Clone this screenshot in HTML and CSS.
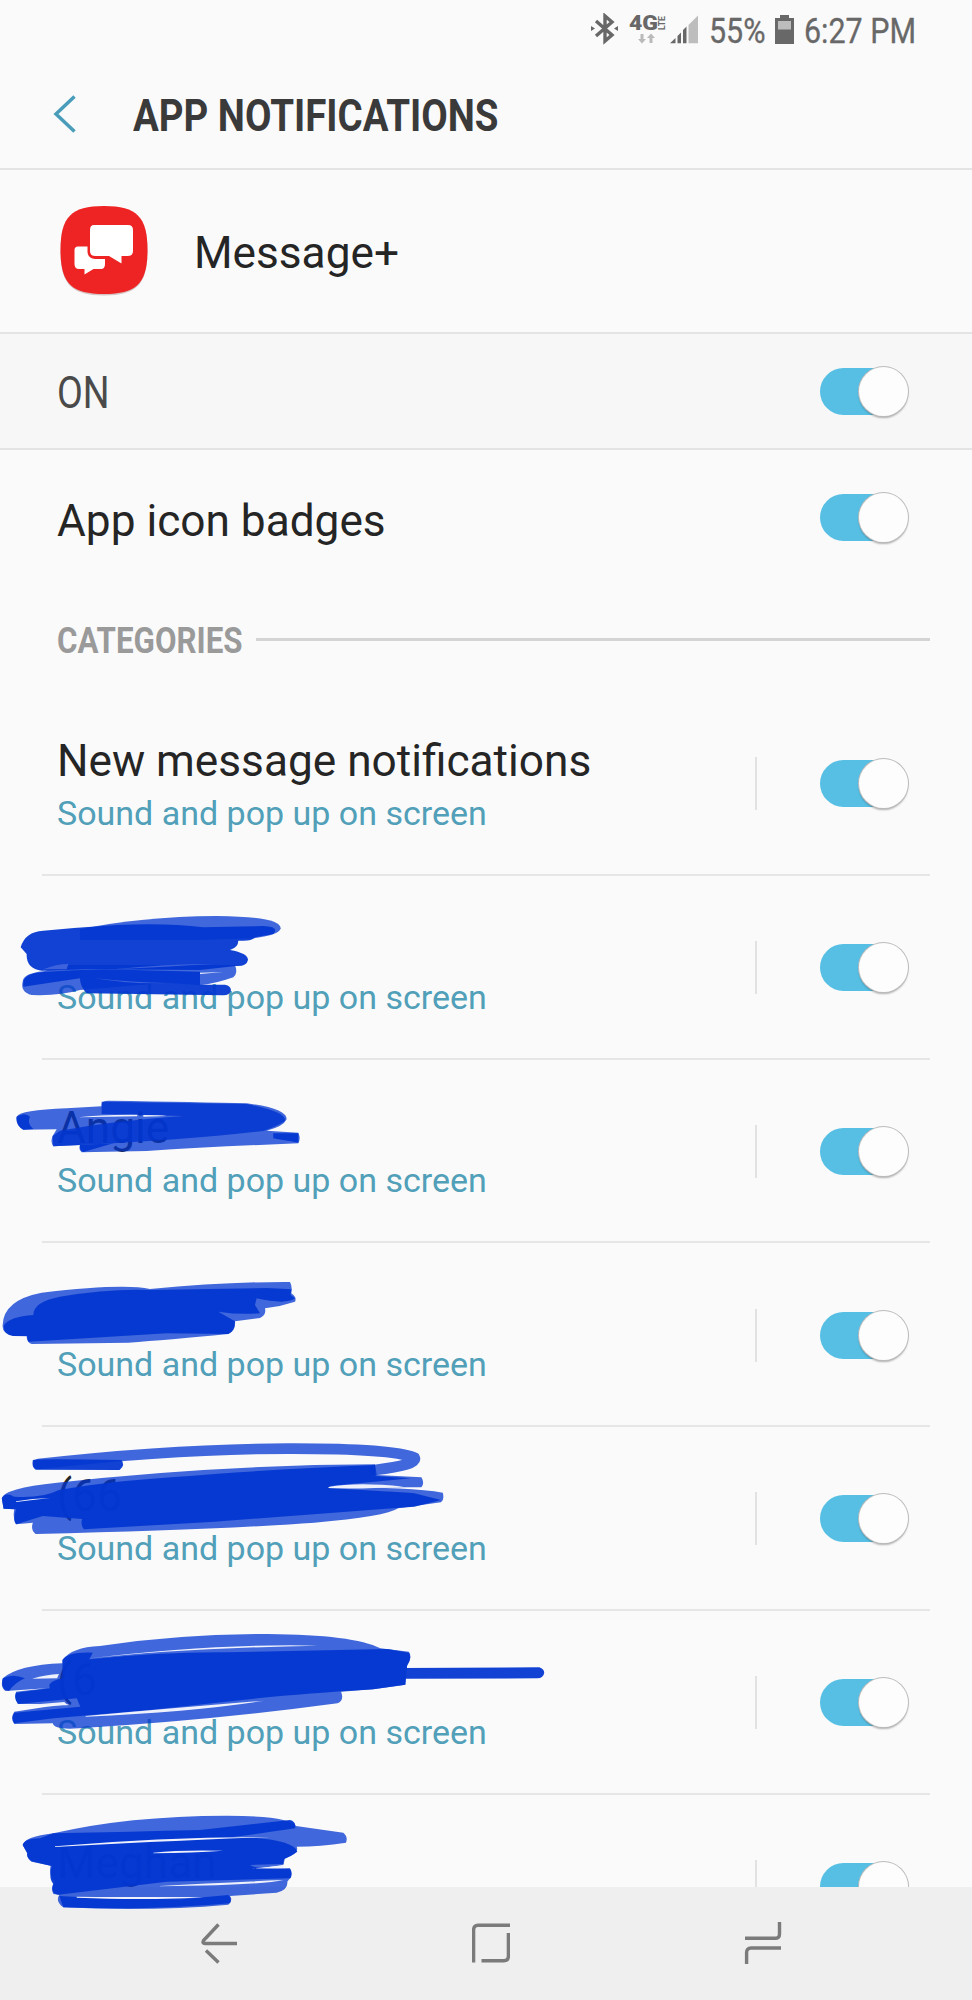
FILE: index.html
```html
<!DOCTYPE html>
<html lang="en">
<head>
  <meta charset="UTF-8">
  <meta name="viewport" content="width=device-width, initial-scale=1.0">
  <title>App notifications</title>
  <link rel="stylesheet" href="styles.css">
</head>
<body>
  <div class="screen">
    <div class="statusbar">
      <svg class="status-icons" width="110" height="32" viewBox="0 0 110 32">
        <g fill="none" stroke="#686868" stroke-width="3.4">
          <path d="M5 8 L21 22 L14 28 V3 L21 9 L5 23"/>
        </g>
        <path fill="#686868" d="M0 13 l4 2.5 l-4 2.5z M27 13 l-4 2.5 l4 2.5z"/>
        <text class="net" x="38" y="17" textLength="29" lengthAdjust="spacingAndGlyphs">4G</text>
        <text class="lte" transform="translate(73.5 17) rotate(-90)" textLength="14" lengthAdjust="spacingAndGlyphs">LTE</text>
        <path fill="#bababa" d="M49.500 21h3v5h2.500l-4 4.500l-4-4.500h2.500z M58.500 30v-5h-2.500l4-4.500l4 4.500h-2.500v5z"/>
        <path fill="#686868" d="M79 30.300 L84.500 25 V30.300z M86.500 30.300 V23 L90 19.500 V30.300z M92 30.300 V17 L95.500 13.500 V30.300z"/>
        <path fill="#bdbdbd" d="M97.500 30.300 V12 L107 2.500 V30.300z"/>
      </svg>
      <span class="battery-text"><span class="squeeze">55%</span></span>
      <svg class="battery" width="19" height="29" viewBox="0 0 19 29">
        <path fill="#686868" d="M5 0h9v3h5v26H0V3h5z"/>
        <path fill="#bdbdbd" d="M3 6h13v8.500H3z"/>
      </svg>
      <span class="clock"><span class="squeeze">6:27 PM</span></span>
    </div>

    <header>
      <svg class="back" width="24" height="38" viewBox="0 0 24 38">
        <path fill="none" stroke="#4a9dba" stroke-width="3.500" d="M21.500 1.500 L3 19 L21.500 36.500"/>
      </svg>
      <h1>APP NOTIFICATIONS</h1>
    </header>

    <div class="app">
      <svg class="app-icon" width="90" height="92" viewBox="0 0 90 92">
        <path fill="#d5c4c4" d="M45 3 C78 3 88.500 13 88.500 46 C88.500 79 78 90.500 45 90.500 C12 90.500 1.500 79 1.500 46 C1.500 13 12 3 45 3z"/>
        <path fill="#ee2324" d="M45 1 C78 1 88.500 12 88.500 45 C88.500 78 78 89 45 89 C12 89 1.500 78 1.500 45 C1.500 12 12 1 45 1z"/>
        <path fill="#fff" d="M35 20 H69 Q74 20 74 25 V46 Q74 51 69 51 H62.500 V58.500 L50 51 H36 Q31 51 31 46 V25 Q31 20 35 20z"/>
        <path fill="#fff" d="M19 41.500 H28.500 V47 Q29 53.500 36 54 H46 V59 Q46 64 42 64 H34.500 L25.500 69.500 V64 H20 Q15.500 64 15.500 59 V45 Q15.500 41.500 19 41.500z"/>
      </svg>
      <span class="label">Message+</span>
    </div>

    <div class="row master">
      <span class="label on">ON</span>
      <span class="toggle"></span>
    </div>

    <div class="row badges">
      <span class="label">App icon badges</span>
      <span class="toggle"></span>
    </div>

    <div class="section"><h2>CATEGORIES</h2><hr></div>

    <div class="list">
      <div class="item">
        <div class="text"><div class="name">New message notifications</div><div class="sub">Sound and pop up on screen</div></div>
        <span class="toggle"></span>
      </div>
      <div class="item">
        <div class="text"><div class="name">&nbsp;</div><div class="sub">Sound and pop up on screen</div></div>
        <span class="toggle"></span>
      </div>
      <div class="item">
        <div class="text"><div class="name">Angie</div><div class="sub">Sound and pop up on screen</div></div>
        <span class="toggle"></span>
      </div>
      <div class="item">
        <div class="text"><div class="name">&nbsp;</div><div class="sub">Sound and pop up on screen</div></div>
        <span class="toggle"></span>
      </div>
      <div class="item">
        <div class="text"><div class="name">(66</div><div class="sub">Sound and pop up on screen</div></div>
        <span class="toggle"></span>
      </div>
      <div class="item">
        <div class="text"><div class="name">(6</div><div class="sub">Sound and pop up on screen</div></div>
        <span class="toggle"></span>
      </div>
      <div class="item">
        <div class="text"><div class="name">Meghan</div><div class="sub">&nbsp;</div></div>
        <span class="toggle"></span>
      </div>
    </div>

    <nav>
      <svg width="38" height="42" viewBox="0 0 38 42"><path d="M18.500 2.500 L3.500 18.500 Q2 21.500 5 21.500 H37 M6 28.500 L18.500 40.500"/></svg>
      <svg width="38" height="42" viewBox="0 0 38 42"><path d="M1.600 40.500 V8 Q1.600 3.300 6 3.300 H38 M36.400 11 V34 Q36.400 38.700 32 38.700 H9.500"/></svg>
      <svg width="38" height="42" viewBox="0 0 38 42"><path d="M35.500 0 V12 Q35.500 16.300 31 16.300 H1 M37 26 H7 Q2.600 26 2.600 30.500 V42"/></svg>
    </nav>

    <!-- marker strokes over the contact names -->
    <svg class="ink" width="972" height="2000" viewBox="0 0 972 2000">
      <g transform="translate(0 890) scale(.3333)">
        <path class="wash" d="M240 118 Q420 80 650 78 Q842 80 842 115 Q840 135 760 145 L600 150 L240 150z"/>
        <path class="solid" d="M62 172 Q75 125 130 122 Q240 112 350 105 Q500 98 610 112 L790 108 Q840 110 820 132 L765 142 Q755 155 715 152 Q715 172 690 180 Q745 190 744 210 Q740 230 708 228 L600 240 L260 238 L125 242 Q78 235 80 192z"/>
        <path class="wash" d="M190 225 L705 225 Q715 250 700 262 Q650 280 600 286 L500 278 L240 300 Q180 318 95 315 Q60 305 68 275 Q70 250 130 244z"/>
        <path class="solid" d="M70 275 Q75 250 130 246 Q260 235 400 240 L600 245 V284 L675 284 Q693 288 693 301 Q690 316 670 316 L260 310 Q240 290 240 265 L70 290z"/>
        <path class="gap-soft" d="M280 264 Q400 278 500 279 Q400 284 280 264z M340 238 Q500 222 640 222 Q500 230 340 238z M130 238 Q170 222 205 222 L200 238z"/>
        <path class="gap" d="M600 248 L670 246 L600 252z"/>
      </g>
      <g transform="translate(0 1080) scale(.3333)">
        <path class="wash" d="M50 110 Q60 90 200 85 L305 79 Q302 62 325 62 Q600 66 740 70 Q860 85 860 118 Q850 140 800 152 L895 158 Q903 175 895 190 Q640 200 440 213 L245 217 Q235 210 240 195 L160 199 Q150 185 158 168 L170 148 L70 149 Q45 135 50 110z"/>
        <path class="solid angie" d="M305 65 L740 72 Q860 95 855 122 Q840 135 790 153 Q560 180 240 195 L160 199 L158 168 L180 152 Q360 120 550 108 L305 102z"/>
        <path class="solid" d="M50 110 Q75 95 90 110 Q80 130 100 147 L70 149 Q48 138 50 110z M240 195 L340 190 L250 216 Q238 212 240 195z M820 160 L895 160 V188 Q850 180 820 175z"/>
        <path class="gap" d="M235 112 Q300 103 412 104 V109 Q320 111 235 112z M430 105 Q480 105 500 108 L430 110z"/>
      </g>
      <g transform="translate(0 1080) scale(.3333)">
        <path class="wash" d="M8 735 Q10 660 125 638 Q370 610 450 627 Q680 605 870 606 Q878 620 874 640 Q892 652 885 665 Q840 680 795 685 Q800 705 780 714 L705 724 Q708 752 685 762 Q500 780 385 788 L95 792 Q80 788 80 769 L40 768 Q5 760 8 735z"/>
        <path class="solid" d="M12 735 Q30 710 100 705 Q100 665 180 650 Q330 625 450 630 L800 624 L874 628 L872 645 L885 655 Q860 675 770 655 L765 675 L780 700 Q720 705 655 695 L705 724 Q705 752 685 762 L500 760 L85 785 Q80 770 82 768 L40 768 Q8 765 12 735z"/>
      </g>
      <g transform="translate(0 1430) scale(.3571 .3333)">
        <path class="loop" d="M108 102 Q500 55 820 56 Q1100 56 1160 83 Q1170 105 1050 120"/>
        <path class="solid" d="M92 90 Q95 86 340 90 Q352 105 335 120 L100 119 Q88 112 92 90z"/>
        <path class="wash" d="M5 205 Q10 175 160 158 Q600 105 1050 103 L1055 135 L1180 142 Q1190 160 1180 172 L930 172 Q1150 172 1240 188 Q1245 210 1235 217 L1115 235 Q1080 260 880 278 Q600 300 100 312 Q85 300 92 278 L45 283 Q35 265 40 238 L10 236z"/>
        <path class="solid" d="M5 205 Q15 185 40 200 Q120 205 165 180 Q300 155 480 142 Q800 115 1050 105 L1052 138 L1150 145 L925 168 L920 175 Q1100 185 1160 190 L1235 210 L1160 230 L1100 235 L600 275 L235 298 Q225 285 230 267 L120 258 L45 283 Q35 270 45 238 L10 236z"/>
        <path class="gap" d="M45 214 Q90 205 140 204 Q90 210 45 216z M920 171 Q1000 155 1130 170 Q1000 178 920 174z"/>
      </g>
      <g transform="translate(0 1610) scale(.3571 .3333)">
        <path class="wash" d="M175 150 Q200 112 280 108 Q500 72 750 72 Q990 74 1065 115 L1145 125 Q1155 140 1140 165 L1135 224 L1045 238 L955 245 Q965 270 945 280 Q600 330 220 355 Q150 360 148 340 L40 342 Q28 325 40 305 Q120 290 200 282 L55 282 Q38 270 45 245 L130 235 L15 243 Q0 230 8 205 Q50 165 175 160z"/>
        <path class="solid" d="M175 150 Q190 125 260 128 L250 148 Q460 125 640 127 L1085 117 L1145 128 Q1155 145 1140 167 L1135 224 L1045 238 Q860 250 720 265 L420 300 L150 325 L40 340 Q30 325 40 308 L225 290 L215 265 L50 282 Q38 265 45 248 L140 235 Q130 215 175 205z M8 205 Q35 190 70 205 Q45 215 25 243 Q0 240 8 205z M1130 174 L1510 172 Q1524 178 1524 188 Q1522 204 1505 205 L1130 206z"/>
        <path class="gap" d="M245 146 Q600 100 890 107 Q500 115 245 146z M90 206 Q130 194 165 192 L160 205z M55 287 L180 276 L190 286z M240 318 Q480 295 740 272 Q550 305 240 320z"/>
      </g>
      <g transform="translate(0 1790) scale(.3333)">
        <path class="wash" d="M68 165 Q75 140 160 130 Q380 78 680 77 Q870 78 888 108 L1030 128 Q1045 140 1038 158 Q960 170 890 170 Q900 190 855 205 L850 225 L780 235 L870 235 Q880 250 870 265 L862 275 Q865 300 830 308 L690 318 Q700 330 685 344 Q450 365 190 352 Q165 335 178 314 L160 312 Q150 290 165 275 Q145 255 152 227 L95 215 Q80 205 82 190z"/>
        <path class="solid" d="M68 165 Q75 145 120 145 L160 130 Q400 125 600 120 L870 90 Q890 95 885 115 Q750 135 700 140 Q880 145 892 185 Q870 200 852 208 L850 222 L750 225 Q770 240 870 236 Q878 250 872 265 L500 275 L175 314 Q150 310 160 282 Q145 265 155 228 L95 214 Q78 200 82 190z M178 318 L300 325 L545 328 L685 315 Q697 325 690 340 Q450 362 190 352z"/>
        <path class="gap" d="M165 169 Q500 140 810 141 Q450 155 165 171z M460 188 Q540 179 670 182 Q580 188 460 190z M480 288 Q650 278 850 270 Q780 286 480 289z M230 320 Q400 322 610 321 Q450 332 230 323z M755 236 L855 226 L850 234z"/>
      </g>
    </svg>
  </div>
</body>
</html>
```
FILE: styles.css
```css
* { box-sizing: border-box; }
body { margin: 0; background: #fafafa; font-family: Roboto, "Liberation Sans", sans-serif; color: #252525; }
h1, h2 { margin: 0; white-space: nowrap; }

.screen { position: relative; width: 972px; height: 2000px; overflow: hidden; display: flex; flex-direction: column; }

.statusbar { height: 60px; flex: none; display: flex; align-items: flex-start; padding: 13px 0 0 591px; color: #686868; font-size: 35px; line-height: 37px; }
.status-icons { flex: none; }
.squeeze { display: inline-block; transform: scaleX(.87); transform-origin: left; white-space: nowrap; -webkit-text-stroke: .3px #686868; }
.battery-text { width: 65px; margin-left: 8px; }
.battery { margin: 2px 10px 0 1px; flex: none; }
.net { font: 900 20px Roboto, sans-serif; fill: #686868; }
.lte { font: 700 9px Roboto, sans-serif; fill: #686868; }

header { height: 110px; flex: none; display: flex; align-items: center; padding: 0 0 1px 53px; border-bottom: 2px solid #e4e4e4; }
.back { margin-top: 1px; margin-right: 56px; }
h1 { font-size: 44.5px; line-height: 52px; color: #3a3a3a; margin-top: 4px; transform: scaleX(.863); transform-origin: left; }

.app { height: 164px; flex: none; display: flex; align-items: center; padding-left: 59px; border-bottom: 2px solid #e4e4e4; }
.app-icon { margin-bottom: 1px; }
.app .label { margin-left: 45px; margin-top: 3px; }
.label, .name { font-size: 44.200px; line-height: 52px; white-space: nowrap; }

.row { flex: none; display: flex; align-items: center; justify-content: space-between; padding: 0 64px 0 57px; }
.master { height: 116px; background: #f7f7f7; border-bottom: 2px solid #e4e4e4; }
.badges { height: 136px; }
.badges .label { margin-top: 5px; }
.badges .toggle { margin-bottom: 1px; }
.label.on { color: #4a4a4a; margin-top: 3px; transform: scaleX(.85); transform-origin: left; }

.toggle { position: relative; flex: none; width: 88px; height: 47px; border-radius: 24px; background: linear-gradient(90deg, #57bfe4 64px, transparent 64px); }
.toggle::after { content: ""; position: absolute; right: 0; top: -1px; width: 49px; height: 49px; border-radius: 50%; background: #fdfdfd; box-shadow: 0 0 0 1px #bcbcbc, 0 2px 2px rgba(0, 0, 0, .3); }

.section { height: 106px; flex: none; display: flex; align-items: center; padding: 2px 42px 0 57px; }
h2 { width: 199px; margin-top: 2px; font-size: 36.500px; line-height: 42px; color: #9a9a9a; transform: scaleX(.857); transform-origin: left; }
hr { flex: 1; height: 3px; margin: 0 0 1px; border: 0; background: #d4d4d4; }

.list { flex: 1; min-height: 0; overflow: hidden; }
.item { height: 183.750px; margin-left: 42px; margin-right: 42px; padding: 2px 22px 0 15px; display: flex; align-items: center; border-bottom: 2px solid #e6e6e6; }
.text { width: 700px; height: 53px; display: flex; flex-direction: column; justify-content: center; padding-top: 6px; border-right: 2px solid #e2e2e2; }
.item .toggle { margin-left: 63px; }
.sub { font-size: 34px; line-height: 52px; color: #519fb8; white-space: nowrap; }

nav { height: 113px; flex: none; display: flex; justify-content: space-between; padding: 35px 190px 0 200px; background: #efefef; }
nav path { fill: none; stroke: #7b7b7b; stroke-width: 3.400; }

.ink { position: absolute; left: 0; top: 0; }
.solid { fill: #0236d0; fill-opacity: .94; }
.solid.angie { fill-opacity: .85; }
.wash { fill: #0236d0; fill-opacity: .75; }
.loop { fill: none; stroke: #0236d0; stroke-opacity: .75; stroke-width: 32; stroke-linecap: round; }
.gap { fill: #eef1fc; }
.gap-soft { fill: #3d62dc; }
```
